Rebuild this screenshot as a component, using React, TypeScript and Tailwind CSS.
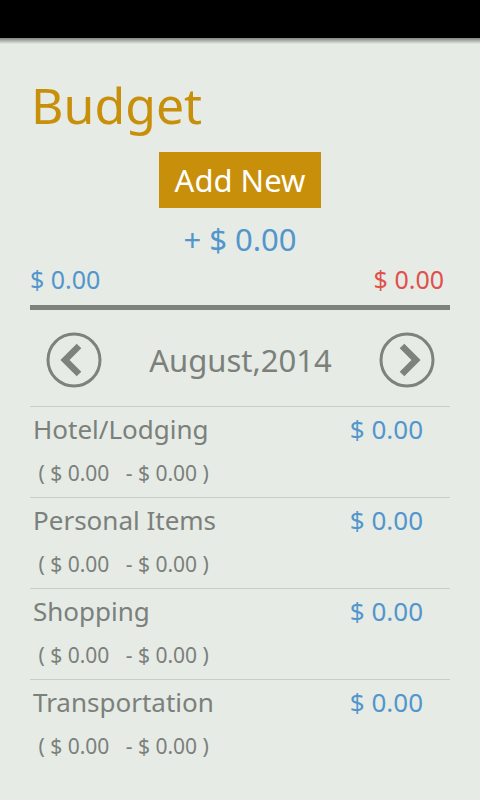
import React from 'react';

const ROWS = ['Hotel/Lodging', 'Personal Items', 'Shopping', 'Transportation'];

function NavButton({ dir }: { dir: 'left' | 'right' }) {
  const points = dir === 'left' ? '33,14 19,28 33,42' : '23,14 37,28 23,42';
  return (
    <button className="h-[56px] w-[56px]" aria-label={dir === 'left' ? 'Previous month' : 'Next month'}>
      <svg viewBox="0 0 56 56" width="56" height="56">
        <circle cx="28" cy="28" r="26" fill="none" stroke="#7d827d" strokeWidth="3" />
        <polyline
          points={points}
          fill="none"
          stroke="#7d827d"
          strokeWidth="6.5"
          strokeLinecap="butt"
          strokeLinejoin="miter"
        />
      </svg>
    </button>
  );
}

function CategoryRow({ name, last }: { name: string; last: boolean }) {
  return (
    <div className={`flex flex-col pt-[9px] pb-[13px] ${last ? '' : 'border-b border-[#c9cec9]'}`}>
      <div className="flex items-start justify-between pl-[3px] pr-[27px]">
        <span className="text-[26px] leading-none text-[#7b807b]">{name}</span>
        <span className="text-[26px] leading-none text-[#5296cc]">$ 0.00</span>
      </div>
      <span className="mt-[21px] whitespace-pre pl-[3px] text-[21px] leading-none text-[#7b807b]">
        {' ( $ 0.00   - $ 0.00 )'}
      </span>
    </div>
  );
}

export default function App() {
  return (
    <div className="flex min-h-[800px] w-[480px] flex-col bg-[#e6ebe6] font-['Noto_Sans',sans-serif]">
      <div className="h-[38px] bg-black" />
      <div className="h-[6px] bg-gradient-to-b from-[#7f847f] to-[#e6ebe6]" />

      <h1 className="mt-[36px] pl-[31px] text-[50px] leading-none font-normal text-[#c8900a]">Budget</h1>

      <div className="mt-[22px] flex justify-center">
        <button className="flex h-[56px] w-[162px] items-center justify-center bg-[#c8900a] text-[31px] leading-none text-white">
          Add New
        </button>
      </div>

      <div className="mt-[16px] text-center text-[31px] leading-none text-[#5296cc]">+ $ 0.00</div>

      <div className="mx-[30px] flex flex-col">
        <div className="mt-[12px] flex justify-between pr-[6px]">
          <span className="text-[25px] leading-none text-[#5296cc]">$ 0.00</span>
          <span className="text-[25px] leading-none text-[#e0504c]">$ 0.00</span>
        </div>
        <div className="mt-[13px] h-[5px] bg-[#7d827d]" />

        <div className="mt-[22px] flex items-center justify-between pl-[16px] pr-[15px]">
          <NavButton dir="left" />
          <span className="text-[31px] leading-none text-[#7b807b]">August,2014</span>
          <NavButton dir="right" />
        </div>

        <div className="mt-[18px] border-t border-[#c9cec9]">
          {ROWS.map((name, i) => (
            <CategoryRow key={name} name={name} last={i === ROWS.length - 1} />
          ))}
        </div>
      </div>
    </div>
  );
}
